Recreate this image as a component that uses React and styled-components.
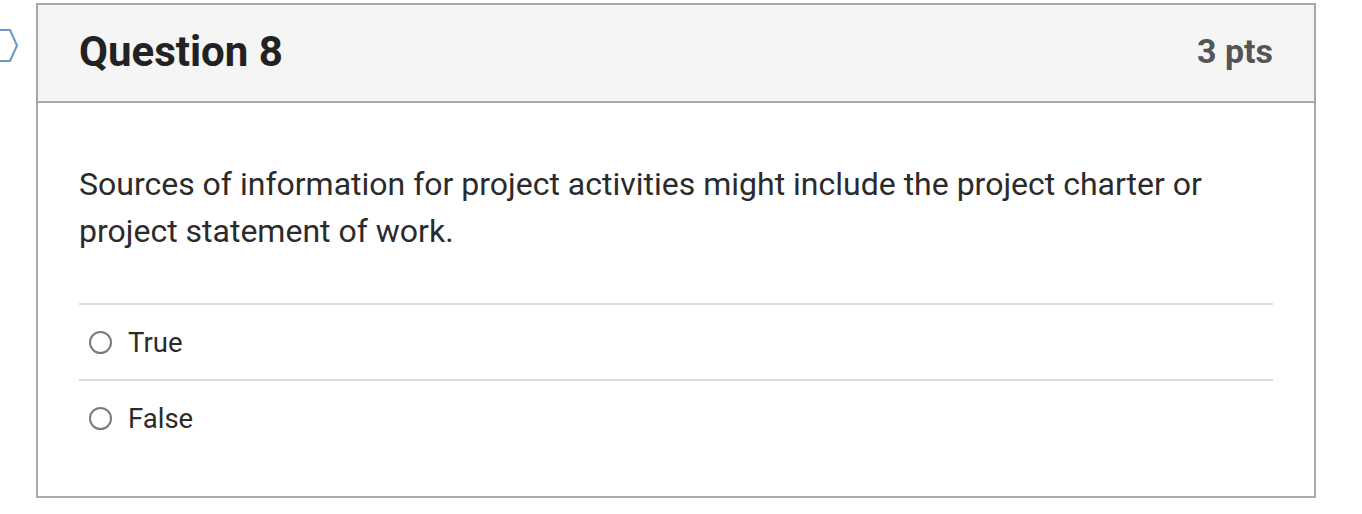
import React from 'react';
import styled, { createGlobalStyle } from 'styled-components';

const Global = createGlobalStyle`
  html, body {
    margin: 0;
    padding: 0;
    background: #fff;
    font-family: Roboto, "Liberation Sans", Arial, sans-serif;
  }
`;

const Page = styled.div`
  position: relative;
  padding: 3px 0 0 36px;
`;

const Flag = styled.svg`
  position: absolute;
  left: 0;
  top: 28px;
`;

const Card = styled.div`
  width: 1280px;
  height: 495px;
  box-sizing: border-box;
  border: 2px solid #a9a9a9;
  display: flex;
  flex-direction: column;
`;

const Header = styled.div`
  height: 98px;
  box-sizing: border-box;
  background: #f5f5f5;
  border-bottom: 2px solid #a9a9a9;
  display: flex;
  align-items: center;
  justify-content: space-between;
  padding: 0 41px 4px 41px;
`;

const Title = styled.h2`
  margin: 0;
  font-size: 42px;
  font-weight: 700;
  color: #222;
`;

const Points = styled.div`
  font-size: 34px;
  font-weight: 700;
  color: #555;
`;

const Body = styled.div`
  padding: 58px 41px 0 41px;
`;

const Text = styled.p`
  margin: 0 0 48px 0;
  font-size: 32px;
  line-height: 47px;
  color: #2b2b2b;
`;

const Answer = styled.label`
  display: flex;
  align-items: center;
  gap: 16px;
  height: 74px;
  border-top: 2px solid #dcdcdc;
  padding-left: 10px;
  font-size: 27.5px;
  color: #2b2b2b;
`;

const Radio = styled.span`
  width: 23px;
  height: 23px;
  border-radius: 50%;
  border: 2px solid #7a7a7a;
  box-sizing: border-box;
  background: #fff;
`;

export default function App() {
  return (
    <>
      <Global />
      <Page>
        <Flag width="22" height="38" viewBox="0 0 22 38">
          <polygon
            points="-4,2 10,2 17,17.5 10,33 -4,33"
            fill="none"
            stroke="#6b98c0"
            strokeWidth="2"
            strokeLinejoin="round"
          />
        </Flag>
        <Card>
          <Header>
            <Title>Question 8</Title>
            <Points>3 pts</Points>
          </Header>
          <Body>
            <Text>
              Sources of information for project activities might include the project charter or
              project statement of work.
            </Text>
            <Answer>
              <Radio />
              True
            </Answer>
            <Answer>
              <Radio />
              False
            </Answer>
          </Body>
        </Card>
      </Page>
    </>
  );
}
